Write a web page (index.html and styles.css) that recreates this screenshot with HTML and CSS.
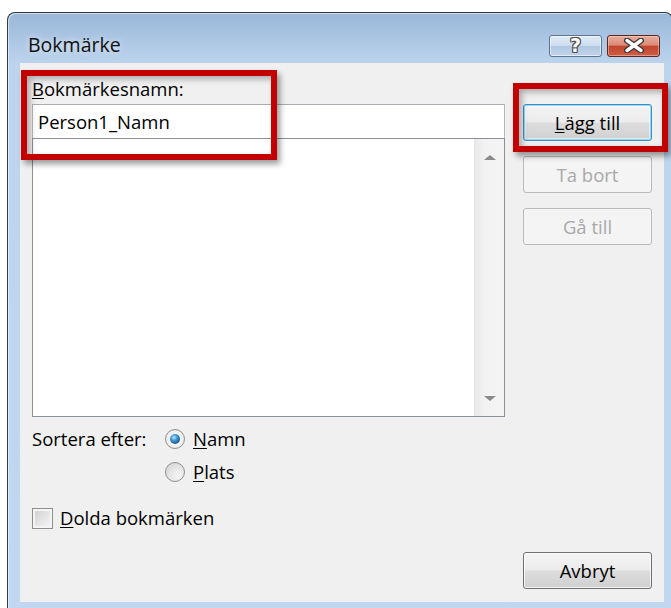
FILE: index.html
```html
<!DOCTYPE html>
<html lang="sv">
<head>
<meta charset="utf-8">
<title>Bokmärke</title>
<link rel="stylesheet" href="styles.css">
</head>
<body>
<div class="window">
  <div class="titlebar">
    <span class="title">Bokmärke</span>
    <div class="caption-buttons">
      <span class="cap-btn help"><span class="help-glyph">?</span></span>
      <span class="cap-btn close">
        <svg width="22" height="15" viewBox="0 0 22 15" aria-hidden="true">
          <path d="M4 2.5 L18 12.5 M18 2.5 L4 12.5" stroke="#3a3a3a" stroke-width="6" stroke-linecap="round"/>
          <path d="M4 2.5 L18 12.5 M18 2.5 L4 12.5" stroke="#ffffff" stroke-width="3.4" stroke-linecap="round"/>
        </svg>
      </span>
    </div>
  </div>
  <div class="client">
    <div class="name-label"><u>B</u>okmärkesnamn:</div>
    <div class="main">
      <div class="left">
        <div class="name-input">Person1_Namn</div>
        <div class="listbox">
          <div class="list-items"></div>
          <div class="vscroll">
            <span class="scroll-btn"><span class="tri up"></span></span>
            <span class="scroll-track"></span>
            <span class="scroll-btn"><span class="tri down"></span></span>
          </div>
        </div>
        <div class="sort">
          <span class="sort-label">Sortera efter:</span>
          <div class="sort-options">
            <div class="option"><span class="radio checked"></span><span><u>N</u>amn</span></div>
            <div class="option"><span class="radio"></span><span><u>P</u>lats</span></div>
          </div>
        </div>
        <div class="option hidden-marks"><span class="checkbox"></span><span><u>D</u>olda bokmärken</span></div>
      </div>
      <div class="right">
        <button class="btn default"><u>L</u>ägg till</button>
        <button class="btn" disabled>Ta bort</button>
        <button class="btn" disabled>Gå till</button>
        <button class="btn cancel">Avbryt</button>
      </div>
    </div>
    <div class="callout callout-name"></div>
    <div class="callout callout-add"></div>
  </div>
</div>
</body>
</html>
```
FILE: styles.css
```css
html, body {
  margin: 0;
  height: 100%;
  overflow: hidden;
  background: #ffffff;
}

body {
  font-family: "Open Sans", "Noto Sans", sans-serif;
  font-size: 18.5px;
  color: #000000;
}

u {
  text-decoration: underline;
  text-underline-offset: 2px;
}

/* Window frame */
.window {
  box-sizing: border-box;
  width: 666px;
  margin: 12px 0 0 7px;
  border: 1px solid #333a44;
  border-bottom: none;
  border-radius: 8px 8px 0 0;
  padding: 0 8px 6px 12px;
  background: linear-gradient(to bottom, #9ab7d8 0, #aec8e5 30px, #bed4ed 52px, #c1d7ef 100%);
  box-shadow: inset 1px 1px 0 rgba(255, 255, 255, 0.55);
}

.titlebar {
  box-sizing: border-box;
  height: 50px;
  padding: 12px 4px 0 8px;
  display: flex;
  align-items: center;
  justify-content: space-between;
}

.title {
  font-size: 19.5px;
  color: #111111;
  text-shadow: 0 0 6px rgba(255, 255, 255, 0.8);
}

.caption-buttons {
  display: flex;
  gap: 5px;
  margin-top: 3px;
}

.cap-btn {
  box-sizing: border-box;
  width: 53px;
  height: 22px;
  border-radius: 3px;
  display: flex;
  align-items: center;
  justify-content: center;
}

.help {
  border: 1px solid #5d7593;
  background: linear-gradient(to bottom, #e1ebf6 0, #cddcee 48%, #b2c8e2 52%, #bfd3eb 100%);
  box-shadow: inset 0 0 0 1px rgba(255, 255, 255, 0.55);
}

.help-glyph {
  font-family: "DejaVu Sans", sans-serif;
  font-weight: bold;
  font-size: 19px;
  line-height: 19px;
  color: #ffffff;
  text-shadow: -1px 0 #505050, 1px 0 #505050, 0 -1px #505050, 0 1px #505050,
    -1px -1px #505050, 1px 1px #505050, -1px 1px #505050, 1px -1px #505050;
}

.close {
  border: 1px solid #5a2620;
  background: linear-gradient(to bottom, #e9ab9c 0, #dc8a78 45%, #c4452d 52%, #cf5e46 100%);
  box-shadow: inset 0 0 0 1px rgba(255, 220, 210, 0.45);
}

/* Client area */
.client {
  position: relative;
  box-sizing: border-box;
  width: 644px;
  height: 539px;
  padding: 15px 12px 13px 12px;
  background: #f0f0f0;
  display: flex;
  flex-direction: column;
}

.name-label {
  height: 22px;
  line-height: 22px;
  margin-bottom: 4px;
}

.main {
  flex: 1;
  display: flex;
  gap: 18px;
}

.left {
  width: 473px;
  display: flex;
  flex-direction: column;
}

.name-input {
  box-sizing: border-box;
  height: 34px;
  line-height: 33px;
  padding-left: 5px;
  background: #ffffff;
  border: 1px solid #b4b8bf;
  border-bottom: none;
  border-top-color: #abadb3;
}

.listbox {
  box-sizing: border-box;
  height: 279px;
  border: 1px solid #8b9099;
  display: flex;
  background: #ffffff;
}

.list-items {
  flex: 1;
}

.vscroll {
  width: 29px;
  display: flex;
  flex-direction: column;
  border-left: 1px solid #e4e4e4;
  background: linear-gradient(to right, #e9e9e9 0, #f2f2f2 30%, #f4f4f4 100%);
}

.scroll-btn {
  height: 36px;
  display: flex;
  align-items: center;
  justify-content: center;
}

.scroll-track {
  flex: 1;
}

.tri {
  width: 0;
  height: 0;
  border-left: 6px solid transparent;
  border-right: 6px solid transparent;
}

.tri.up {
  border-bottom: 5px solid #8a8a8a;
}

.tri.down {
  border-top: 5px solid #8a8a8a;
}

/* Sort options */
.sort {
  display: flex;
  margin-top: 9px;
}

.sort-label {
  width: 133px;
  height: 26px;
  line-height: 26px;
}

.sort-options {
  display: flex;
  flex-direction: column;
  gap: 7px;
}

.option {
  height: 26px;
  line-height: 26px;
  display: flex;
  align-items: center;
  gap: 8px;
}

.radio {
  position: relative;
  box-sizing: border-box;
  width: 20px;
  height: 20px;
  border-radius: 50%;
  border: 1px solid #8e8f8f;
  background: radial-gradient(circle at 65% 70%, #f6f6f6 0, #e6e6e6 45%, #cfcfcf 100%);
}

.radio.checked {
  background: radial-gradient(circle at 50% 50%, #f9f9f9 0, #f2f2f2 55%, #d9d9d9 100%);
}

.radio.checked::after {
  content: "";
  position: absolute;
  left: 4px;
  top: 4px;
  width: 10px;
  height: 10px;
  border-radius: 50%;
  background: radial-gradient(circle at 40% 35%, #bfe9fb 0, #4aa3dc 30%, #155c9c 70%, #0c3f70 100%);
}

.hidden-marks {
  margin-top: 20px;
  gap: 7px;
}

.checkbox {
  box-sizing: border-box;
  width: 21px;
  height: 21px;
  border: 1px solid #8e8f8f;
  background: linear-gradient(135deg, #cbcbcb 0, #e4e4e4 50%, #f6f6f6 100%);
  box-shadow: inset 0 0 0 2px #f4f4f4;
}

/* Command buttons */
.right {
  width: 129px;
  display: flex;
  flex-direction: column;
  gap: 15px;
}

.btn {
  box-sizing: border-box;
  height: 37px;
  padding: 0;
  font-family: inherit;
  font-size: 18.5px;
  color: #000000;
  border: 1px solid #707070;
  border-radius: 3px;
  background: linear-gradient(to bottom, #f4f4f4 0, #ececec 48%, #dddddd 52%, #d0d0d0 100%);
  box-shadow: inset 0 0 0 1px rgba(255, 255, 255, 0.75);
}

.btn.default {
  border-color: #3c8fc8;
  box-shadow: inset 0 0 0 1px #8fd8f7, inset 0 0 0 2px rgba(255, 255, 255, 0.5);
}

.btn:disabled {
  color: #a9a9a9;
  border-color: #b7babd;
  background: #f4f4f4;
  box-shadow: none;
}

.btn.cancel {
  margin-top: auto;
}

/* Red annotation frames drawn over the dialog */
.callout {
  position: absolute;
  box-sizing: border-box;
  border: 6px solid #c20000;
  box-shadow: 3px 4px 6px rgba(0, 0, 0, 0.4), inset 3px 3px 6px rgba(0, 0, 0, 0.3);
  pointer-events: none;
}

.callout-name {
  left: 1px;
  top: 7px;
  width: 256px;
  height: 90px;
}

.callout-add {
  left: 493px;
  top: 20px;
  width: 155px;
  height: 69px;
}
```
